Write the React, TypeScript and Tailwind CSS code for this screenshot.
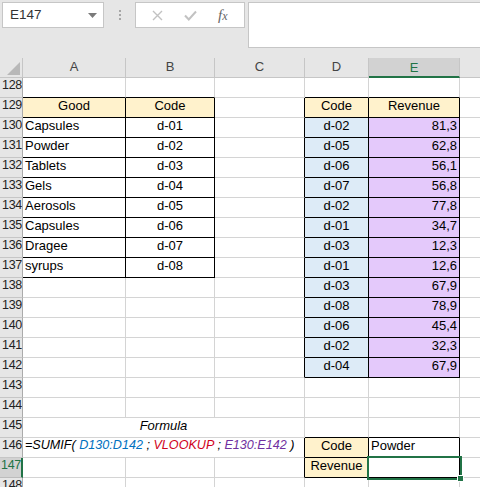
import React from "react";

type Cell = {
  t?: React.ReactNode;
  al?: "l" | "c" | "r";
  bg?: string;
  br?: boolean;
  bb?: boolean;
  it?: boolean;
};

const COLS = ["A", "B", "C", "D", "E", ""];
const COL_W = ["w-[103px]", "w-[89px]", "w-[90px]", "w-[64px]", "w-[91px]", "w-[60px]"];
const MERGED_W = "w-[282px]";

const HEAD = "bg-[#fff2cc]";
const BLUE = "bg-[#ddebf7]";
const LILAC = "bg-[#e4c9fb]";

const goods: [string, string][] = [
  ["Capsules", "d-01"],
  ["Powder", "d-02"],
  ["Tablets", "d-03"],
  ["Gels", "d-04"],
  ["Aerosols", "d-05"],
  ["Capsules", "d-06"],
  ["Dragee", "d-07"],
  ["syrups", "d-08"],
];

const revenue: [string, string][] = [
  ["d-02", "81,3"],
  ["d-05", "62,8"],
  ["d-06", "56,1"],
  ["d-07", "56,8"],
  ["d-02", "77,8"],
  ["d-01", "34,7"],
  ["d-03", "12,3"],
  ["d-01", "12,6"],
  ["d-03", "67,9"],
  ["d-08", "78,9"],
  ["d-06", "45,4"],
  ["d-02", "32,3"],
  ["d-04", "67,9"],
];

function buildRow(n: number): Cell[] {
  const row: Cell[] = [{}, {}, {}, {}, {}, {}];
  if (n === 128) {
    row[0].bb = row[1].bb = row[3].bb = row[4].bb = true;
  }
  if (n === 129) {
    row[0] = { t: "Good", al: "c", bg: HEAD, br: true, bb: true };
    row[1] = { t: "Code", al: "c", bg: HEAD, br: true, bb: true };
    row[2] = { br: true };
    row[3] = { t: "Code", al: "c", bg: HEAD, br: true, bb: true };
    row[4] = { t: "Revenue", al: "c", bg: HEAD, br: true, bb: true };
  }
  if (n >= 130 && n <= 137) {
    const [g, c] = goods[n - 130];
    row[0] = { t: g, al: "l", br: true, bb: true };
    row[1] = { t: c, al: "c", br: true, bb: true };
  }
  if (n >= 130 && n <= 142) {
    const [c, v] = revenue[n - 130];
    row[2] = { br: true };
    row[3] = { t: c, al: "c", bg: BLUE, br: true, bb: true };
    row[4] = { t: v, al: "r", bg: LILAC, br: true, bb: true };
  }
  if (n === 145) {
    row[3].bb = row[4].bb = true;
  }
  return row;
}

function GridCell({ c, w }: { c: Cell; w: string }) {
  const align =
    c.al === "c" ? "justify-center" : c.al === "r" ? "justify-end pr-[2px]" : "justify-start pl-[2px]";
  return (
    <div
      className={`flex h-[20px] shrink-0 items-end whitespace-nowrap border-r border-b pb-[2px] ${w} ${align} ${
        c.bg ?? "bg-white"
      } ${c.br ? "border-r-black" : "border-r-[#d4d4d4]"} ${c.bb ? "border-b-black" : "border-b-[#d4d4d4]"} ${
        c.it ? "italic" : ""
      }`}
    >
      {c.t}
    </div>
  );
}

function RowHead({ n, active }: { n: number; active?: boolean }) {
  return (
    <div
      className={`flex h-[20px] w-[23px] shrink-0 items-end justify-end overflow-hidden border-b pb-[2px] text-[12.5px] tracking-[-0.3px] ${
        active
          ? "border-r-2 border-r-[#217346] border-b-[#bcbcbc] bg-[#d2d2d2] text-[#217346]"
          : "border-r border-r-[#ababab] border-b-[#c6c6c6] bg-[#e6e6e6] text-[#222]"
      }`}
    >
      {n}
    </div>
  );
}

function Toolbar() {
  return (
    <div className="flex h-[58px] items-start bg-[#e6e6e6] pt-[2px] pl-[2px]">
      <div className="flex h-[26px] w-[102px] items-center justify-between border border-[#c6c6c6] bg-white pl-[7px] pr-[6px] text-[13.5px] text-[#333]">
        <span>E147</span>
        <svg width="9" height="5" viewBox="0 0 9 5">
          <path d="M0 0 H9 L4.5 5 Z" fill="#7a7a7a" />
        </svg>
      </div>
      <div className="flex h-[26px] w-[31px] flex-col items-center justify-center gap-[2px]">
        <span className="h-[2px] w-[2px] bg-[#a6a6a6]" />
        <span className="h-[2px] w-[2px] bg-[#a6a6a6]" />
        <span className="h-[2px] w-[2px] bg-[#a6a6a6]" />
      </div>
      <div className="flex h-[26px] w-[110px] items-center justify-around border border-[#c6c6c6] bg-white px-[6px]">
        <svg width="11" height="11" viewBox="0 0 11 11">
          <path d="M1 1 L10 10 M10 1 L1 10" stroke="#c2c2c2" strokeWidth="1.4" fill="none" />
        </svg>
        <svg width="13" height="11" viewBox="0 0 13 11">
          <path d="M1 5.5 L4.8 9.5 L12 1.5" stroke="#c2c2c2" strokeWidth="2" fill="none" />
        </svg>
        <span className="font-['Liberation_Serif',serif] text-[15px] italic leading-none text-[#666]">
          f<span className="text-[12px]">x</span>
        </span>
      </div>
      <div className="ml-[3px] h-[46px] flex-1 border border-r-0 border-[#c6c6c6] bg-white" />
    </div>
  );
}

export default function App() {
  const rows = Array.from({ length: 21 }, (_, i) => 128 + i);
  return (
    <div className="h-[487px] w-[480px] overflow-hidden bg-white font-['Liberation_Sans',Arial,sans-serif] text-[13px] text-black">
      <Toolbar />
      {/* column headers */}
      <div className="flex h-[20px] bg-[#e6e6e6]">
        <div className="flex w-[23px] shrink-0 items-end justify-end border-r border-b border-[#c6c6c6] p-[2px]">
          <svg width="13" height="13" viewBox="0 0 13 13">
            <path d="M13 0 V13 H0 Z" fill="#b8b8b8" />
          </svg>
        </div>
        {COLS.map((col, i) =>
          col === "E" ? (
            <div
              key={i}
              className={`flex shrink-0 items-center justify-center border-r border-b-2 border-r-[#c6c6c6] border-b-[#217346] bg-[#d2d2d2] pt-[1px] text-[#217346] ${COL_W[i]}`}
            >
              {col}
            </div>
          ) : (
            <div
              key={i}
              className={`flex shrink-0 items-center justify-center border-r border-b border-[#c6c6c6] pb-[1px] text-[#444] ${COL_W[i]}`}
            >
              {col}
            </div>
          )
        )}
      </div>
      {/* body rows */}
      {rows.map((n) => {
        if (n === 145) {
          const r = buildRow(n);
          return (
            <div key={n} className="flex">
              <RowHead n={n} />
              <GridCell c={{ t: "Formula", al: "c", it: true }} w={MERGED_W} />
              <GridCell c={r[3]} w={COL_W[3]} />
              <GridCell c={r[4]} w={COL_W[4]} />
              <GridCell c={r[5]} w={COL_W[5]} />
            </div>
          );
        }
        if (n === 146) {
          return (
            <div key={n} className="flex">
              <RowHead n={n} />
              <GridCell
                c={{
                  al: "l",
                  it: true,
                  br: true,
                  t: (
                    <span className="text-[12.6px]">
                      =SUMIF( <span className="text-[#0070c0]">D130:D142</span> ;{" "}
                      <span className="text-[#d0021b]">VLOOKUP</span> ;{" "}
                      <span className="text-[#7030a0]">E130:E142</span> )
                    </span>
                  ),
                }}
                w={MERGED_W}
              />
              <GridCell c={{ t: "Code", al: "c", bg: HEAD, br: true, bb: true }} w={COL_W[3]} />
              <GridCell c={{ t: "Powder", al: "l", br: true, bb: true }} w={COL_W[4]} />
              <GridCell c={{}} w={COL_W[5]} />
            </div>
          );
        }
        if (n === 147) {
          return (
            <div key={n} className="flex">
              <RowHead n={n} active />
              <GridCell c={{}} w={COL_W[0]} />
              <GridCell c={{}} w={COL_W[1]} />
              <GridCell c={{ br: true }} w={COL_W[2]} />
              <GridCell c={{ t: "Revenue", al: "c", bg: HEAD, br: true, bb: true }} w={COL_W[3]} />
              <div className="relative">
                <GridCell c={{ br: true, bb: true }} w={COL_W[4]} />
                {/* selection frame */}
                <div className="absolute -top-[2px] -left-[2px] -right-[2px] -bottom-[2px] border-2 border-[#217346]">
                  <div className="absolute -right-[4px] -bottom-[4px] h-[7px] w-[7px] border border-white bg-[#217346]" />
                </div>
              </div>
              <GridCell c={{}} w={COL_W[5]} />
            </div>
          );
        }
        const r = buildRow(n);
        return (
          <div key={n} className="flex">
            <RowHead n={n} />
            {r.map((c, i) => (
              <GridCell key={i} c={c} w={COL_W[i]} />
            ))}
          </div>
        );
      })}
    </div>
  );
}
